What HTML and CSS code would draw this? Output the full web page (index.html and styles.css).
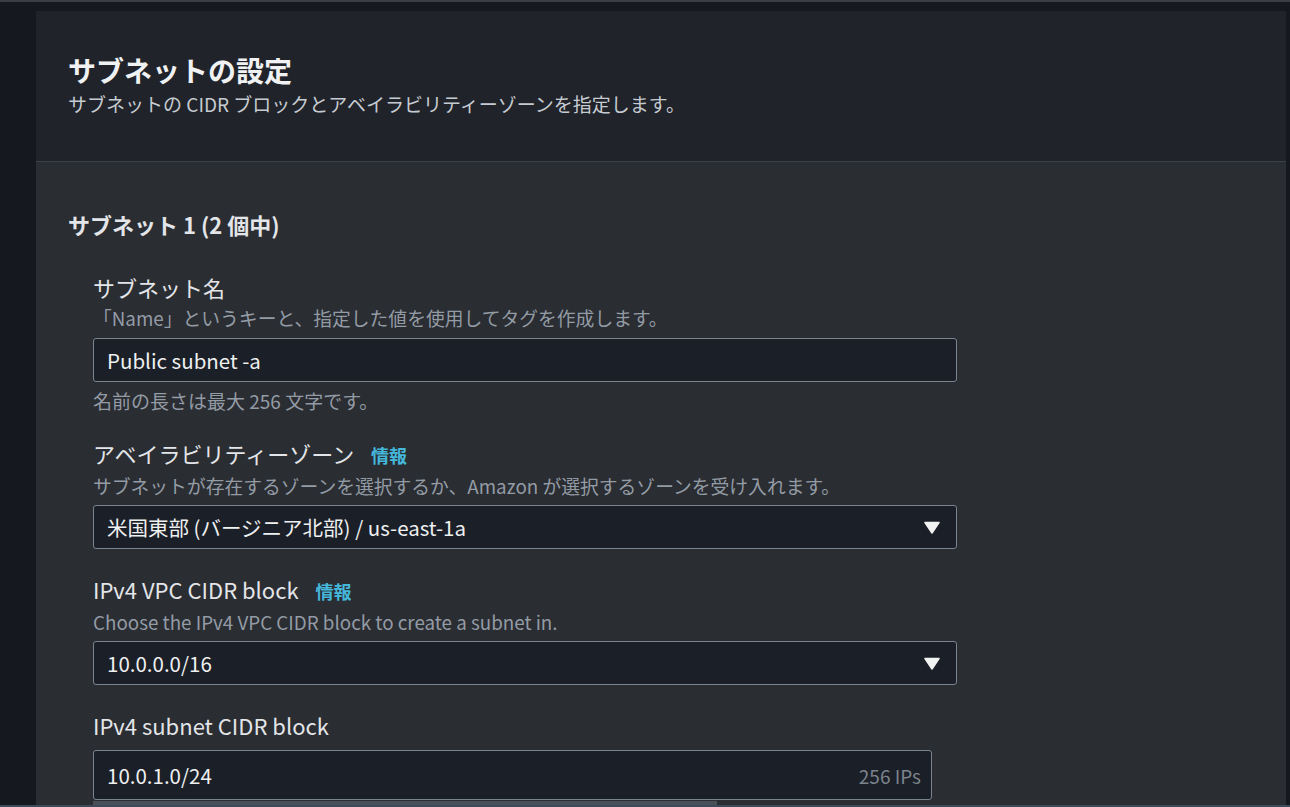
FILE: index.html
```html
<!DOCTYPE html>
<html lang="ja">
<head>
<meta charset="utf-8">
<title>サブネットの設定</title>
<link rel="stylesheet" href="styles.css">
</head>
<body>
<div class="page">
  <section class="card">
    <header class="card-header">
      <h1 class="title">サブネットの設定</h1>
      <p class="subtitle">サブネットの CIDR ブロックとアベイラビリティーゾーンを指定します。</p>
    </header>
    <div class="card-body">
      <h2 class="section-title">サブネット 1 (2 個中)</h2>
      <div class="fields">
        <div class="field">
          <div class="label">サブネット名</div>
          <div class="desc">「Name」というキーと、指定した値を使用してタグを作成します。</div>
          <div class="input">Public subnet -a</div>
          <div class="constraint">名前の長さは最大 256 文字です。</div>
        </div>
        <div class="field">
          <div class="label">アベイラビリティーゾーン <span class="info">情報</span></div>
          <div class="desc">サブネットが存在するゾーンを選択するか、Amazon が選択するゾーンを受け入れます。</div>
          <div class="input select">
            <span>米国東部 (バージニア北部) / us-east-1a</span>
            <svg class="caret" width="16" height="13" viewBox="0 0 16 13"><path d="M1 1.5 H15 L8 12 Z" fill="#f2f3f3" stroke="#f2f3f3" stroke-width="1.5" stroke-linejoin="round"/></svg>
          </div>
        </div>
        <div class="field">
          <div class="label">IPv4 VPC CIDR block <span class="info">情報</span></div>
          <div class="desc">Choose the IPv4 VPC CIDR block to create a subnet in.</div>
          <div class="input select">
            <span>10.0.0.0/16</span>
            <svg class="caret" width="16" height="13" viewBox="0 0 16 13"><path d="M1 1.5 H15 L8 12 Z" fill="#f2f3f3" stroke="#f2f3f3" stroke-width="1.5" stroke-linejoin="round"/></svg>
          </div>
        </div>
        <div class="field field-last">
          <div class="label">IPv4 subnet CIDR block</div>
          <div class="input cidr">
            <span>10.0.1.0/24</span>
            <span class="suffix">256 IPs</span>
          </div>
          <div class="hscroll"><div class="thumb"></div></div>
        </div>
      </div>
    </div>
  </section>
</div>
<div class="bottom-line"></div>
</body>
</html>
```
FILE: styles.css
```css
html, body {
  margin: 0;
  padding: 0;
  height: 100%;
  overflow: hidden;
}
body {
  background: #15191f;
  border-top: 2px solid #3a3d43;
  box-sizing: border-box;
  font-family: "Noto Sans CJK JP", "Noto Sans", sans-serif;
  color: #e9ebed;
}
.page {
  padding: 9px 4px 0 36px;
}
.card {
  background: #2a2d32;
  min-height: 820px;
}
.card-header {
  background: #20232a;
  padding: 41px 32px 45px 32px;
  border-bottom: 1px solid #3b4149;
}
.title {
  margin: 0;
  font-size: 28px;
  line-height: 36px;
  font-weight: 700;
  color: #f0f1f2;
}
.subtitle {
  margin: 4px 0 0 0;
  font-size: 19px;
  line-height: 24px;
  color: #c6cbd1;
}
.card-body {
  padding: 48px 32px 0 32px;
}
.section-title {
  margin: 0;
  font-size: 22px;
  line-height: 28px;
  font-weight: 700;
  color: #e3e5e8;
}
.fields {
  padding-left: 25px;
  padding-top: 35px;
  display: flex;
  flex-direction: column;
  gap: 26px;
}
.field {
  display: flex;
  flex-direction: column;
  width: 864px;
}
.label {
  font-size: 22px;
  line-height: 28px;
  color: #e3e5e8;
}
.info {
  margin-left: 12px;
  font-size: 18px;
  font-weight: 700;
  color: #44b7da;
}
.desc {
  margin-top: 5px;
  font-size: 18.8px;
  line-height: 24px;
  color: #939ba5;
}
.input {
  margin-top: 8px;
  height: 44px;
  box-sizing: border-box;
  border: 1px solid #7a848e;
  border-radius: 3px;
  background: #1b1f27;
  padding: 0 16px 0 13px;
  display: flex;
  align-items: center;
  justify-content: space-between;
  font-size: 20.5px;
  color: #eef0f1;
}
.select {
  margin-top: 7px;
}
.constraint {
  margin-top: 7px;
  font-size: 19px;
  line-height: 24px;
  color: #939ba5;
}
.field-last {
  width: 839px;
}
.field-last .input {
  margin-top: 11px;
  height: 50px;
  padding-right: 10px;
}
.suffix {
  font-size: 19px;
  color: #7b838c;
}
.hscroll {
  height: 5px;
  margin-top: 1px;
}
.thumb {
  width: 624px;
  height: 5px;
  background: #4a5058;
}
.bottom-line {
  position: fixed;
  left: 0;
  right: 0;
  bottom: 0;
  height: 2px;
  background: #3c4a5a;
}
```
